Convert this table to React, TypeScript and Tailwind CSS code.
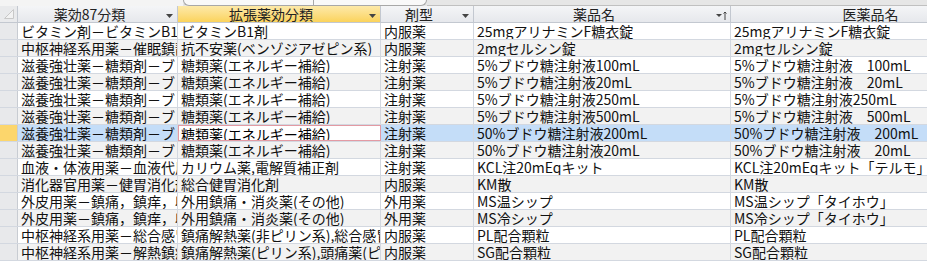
const FONT = { fontFamily: '"Noto Sans CJK JP", "Noto Sans", sans-serif' }

type Row = [string, string, string, string, string]

const rows: Row[] = [
    ['ビタミン剤－ビタミンB1剤', 'ビタミンB1剤', '内服薬', '25mgアリナミンF糖衣錠', '25mgアリナミンF糖衣錠'],
    ['中枢神経系用薬－催眠鎮静剤', '抗不安薬(ベンゾジアゼピン系)', '内服薬', '2mgセルシン錠', '2mgセルシン錠'],
    ['滋養強壮薬－糖類剤－ブドウ糖', '糖類薬(エネルギー補給)', '注射薬', '5%ブドウ糖注射液100mL', '5%ブドウ糖注射液　100mL'],
    ['滋養強壮薬－糖類剤－ブドウ糖', '糖類薬(エネルギー補給)', '注射薬', '5%ブドウ糖注射液20mL', '5%ブドウ糖注射液　20mL'],
    ['滋養強壮薬－糖類剤－ブドウ糖', '糖類薬(エネルギー補給)', '注射薬', '5%ブドウ糖注射液250mL', '5%ブドウ糖注射液250mL'],
    ['滋養強壮薬－糖類剤－ブドウ糖', '糖類薬(エネルギー補給)', '注射薬', '5%ブドウ糖注射液500mL', '5%ブドウ糖注射液　500mL'],
    ['滋養強壮薬－糖類剤－ブドウ糖', '糖類薬(エネルギー補給)', '注射薬', '50%ブドウ糖注射液200mL', '50%ブドウ糖注射液　200mL'],
    ['滋養強壮薬－糖類剤－ブドウ糖', '糖類薬(エネルギー補給)', '注射薬', '50%ブドウ糖注射液20mL', '50%ブドウ糖注射液　20mL'],
    ['血液・体液用薬－血液代用剤', 'カリウム薬,電解質補正剤', '注射薬', 'KCL注20mEqキット', 'KCL注20mEqキット「テルモ」'],
    ['消化器官用薬－健胃消化剤', '総合健胃消化剤', '内服薬', 'KM散', 'KM散'],
    ['外皮用薬－鎮痛，鎮痒，収斂，消炎剤', '外用鎮痛・消炎薬(その他)', '外用薬', 'MS温シップ', 'MS温シップ「タイホウ」'],
    ['外皮用薬－鎮痛，鎮痒，収斂，消炎剤', '外用鎮痛・消炎薬(その他)', '外用薬', 'MS冷シップ', 'MS冷シップ「タイホウ」'],
    ['中枢神経系用薬－総合感冒剤', '鎮痛解熱薬(非ピリン系),総合感冒薬', '内服薬', 'PL配合顆粒', 'PL配合顆粒'],
    ['中枢神経系用薬－解熱鎮痛消炎剤', '鎮痛解熱薬(ピリン系),頭痛薬(ピリン系)', '内服薬', 'SG配合顆粒', 'SG配合顆粒'],
]

const widths = ['w-[160px]', 'w-[203px]', 'w-[93px]', 'w-[257px]', 'w-[296px]']
const SELECTED = 6

const DropArrow = () => (
    <svg width="7" height="4" viewBox="0 0 7 4" className="absolute right-[4px] top-[8px]">
        <path d="M0 0h7L3.5 4z" fill="#444" />
    </svg>
)

const SortArrow = () => (
    <svg width="11" height="9" viewBox="0 0 11 9" className="absolute right-[3px] top-[5px]">
        <path d="M0 3h6L3 6z" fill="#444" />
        <path d="M9 1v8M7.5 2.5L9 1l1.5 1.5" stroke="#444" strokeWidth="1" fill="none" />
    </svg>
)

const HeaderCell = ({ label, width, active, sort }: { label: string; width: string; active?: boolean; sort?: boolean }) => (
    <div
        className={`${width} relative shrink-0 h-full border-r border-[#c3c8d0] pr-[16px] text-center leading-[16px] ${
            active ? 'bg-linear-to-b from-[#fde9a8] to-[#fbd35a]' : 'bg-linear-to-b from-[#f4f5f7] to-[#e6e8ec]'
        }`}
    >
        {label}
        {sort ? <SortArrow /> : <DropArrow />}
    </div>
)

export default function App() {
    return (
        <div className="w-[927px] h-[262px] overflow-hidden bg-white text-[14px] text-[#111]" style={FONT}>
            {/* tab strip at the top */}
            <div className="flex h-[6px] bg-[#e6e6e6]">
                <div className="w-[183px] bg-[#f4f4f4]" />
                <div className="w-[130px] bg-[#f9f9f9] border-l border-b border-[#a8a8a8] rounded-bl-[6px]" />
                <div className="w-[114px] bg-[#f9f9f9] border-l border-r border-b border-[#a8a8a8] rounded-br-[6px]" />
                <div className="flex-1 border-b border-[#c0c0c0]" />
            </div>

            {/* header */}
            <div className="flex h-[17px] border-b border-[#c3c8d0] text-[#222] whitespace-nowrap">
                <div className="w-[18px] shrink-0 h-full border-r border-[#c3c8d0] bg-[#e9eaec] relative">
                    <svg width="10" height="10" viewBox="0 0 10 10" className="absolute left-[4px] top-[3px]">
                        <path d="M0.5 9.5L9.5 0.5V9.5z" fill="#f2f2f2" stroke="#c8c8c8" strokeWidth="1" />
                    </svg>
                </div>
                <HeaderCell label="薬効87分類" width={widths[0]} />
                <HeaderCell label="拡張薬効分類" width={widths[1]} active />
                <HeaderCell label="剤型" width={widths[2]} />
                <HeaderCell label="薬品名" width={widths[3]} sort />
                <HeaderCell label="医薬品名" width={widths[4]} />
            </div>

            {/* data rows */}
            {rows.map((row, i) => {
                const selected = i === SELECTED
                const rowBg = selected ? 'bg-[#c4ddf8]' : i % 2 === 0 ? 'bg-white' : 'bg-[#f2f2f2]'
                return (
                    <div key={i} className={`flex h-[17px] border-b border-[#d3d8e0] whitespace-nowrap ${rowBg}`}>
                        <div
                            className={`w-[18px] shrink-0 h-full border-r border-[#c8ccd2] ${
                                selected ? 'bg-[#fcd66c]' : 'bg-[#e8e9eb]'
                            }`}
                        />
                        {row.map((cell, j) => {
                            const active = selected && j === 1
                            return (
                                <div
                                    key={j}
                                    className={`${widths[j]} shrink-0 h-full overflow-hidden leading-[16px] ${
                                        active
                                            ? 'bg-white border border-[#e39aa3] pl-[2px] text-black'
                                            : 'border-r border-[#d3d8e0] pl-[3px]'
                                    }`}
                                >
                                    {cell}
                                </div>
                            )
                        })}
                    </div>
                )
            })}
        </div>
    )
}
